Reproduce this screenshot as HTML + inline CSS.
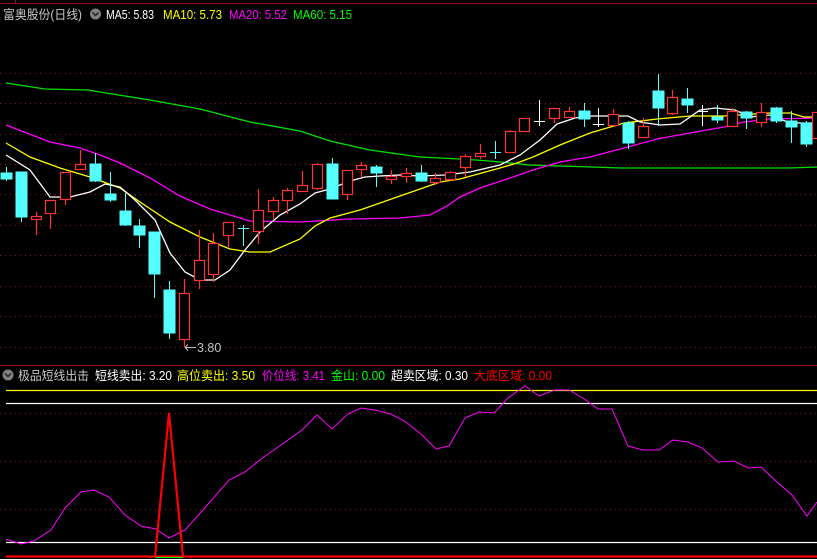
<!DOCTYPE html>
<html><head><meta charset="utf-8"><style>
html,body{margin:0;padding:0;background:#000;width:817px;height:559px;overflow:hidden}
svg{display:block}
text{font-family:"Liberation Sans","Noto Sans CJK SC",sans-serif;font-size:12.5px}
</style></head><body>
<svg width="817" height="559" viewBox="0 0 817 559" xmlns="http://www.w3.org/2000/svg">
<rect width="817" height="559" fill="#000"/>
<line x1="0" y1="3.5" x2="817" y2="3.5" stroke="#a01010" stroke-width="1"/>
<line x1="15.5" y1="0" x2="15.5" y2="3" stroke="#a01010"/>
<line x1="0" y1="365.5" x2="817" y2="365.5" stroke="#a01010" stroke-width="1"/>
<g stroke="#8a1a1a" stroke-dasharray="1,4" stroke-width="1">
<line x1="0" y1="73.5" x2="817" y2="73.5"/><line x1="0" y1="103.5" x2="817" y2="103.5"/>
<line x1="0" y1="134.5" x2="817" y2="134.5"/><line x1="0" y1="164.5" x2="817" y2="164.5"/>
<line x1="0" y1="194.5" x2="817" y2="194.5"/><line x1="0" y1="225.5" x2="817" y2="225.5"/>
<line x1="0" y1="255.5" x2="817" y2="255.5"/><line x1="0" y1="286.5" x2="817" y2="286.5"/>
<line x1="0" y1="316.5" x2="817" y2="316.5"/><line x1="0" y1="347.5" x2="817" y2="347.5"/>
<line x1="0" y1="413.5" x2="817" y2="413.5"/><line x1="0" y1="461.5" x2="817" y2="461.5"/>
<line x1="0" y1="509.5" x2="817" y2="509.5"/>
</g>
<polyline fill="none" stroke="#00e000" stroke-width="1.3" points="6,83 45,89 88,90 100,92 150,100 200,109 250,122 300,131 330,141 370,150 420,157 460,159 490,161 530,165 560,166 592,167 620,168 700,168 790,168 817,167"/>
<polyline fill="none" stroke="#ff00ff" stroke-width="1.3" points="6,125 50,142 80,148 100,155 120,163 150,178 180,196 210,209 250,221 300,222 350,219 400,218 430,215 447,206 460,197 480,188 507,179 533,170 560,162 590,157 624,148 657,139 690,133 724,127 744,122 770,119 817,118"/>
<polyline fill="none" stroke="#ffff00" stroke-width="1.3" points="6,143 30,157 60,168 90,177 120,188 140,202 170,222 200,237 230,249 250,252 270,252 300,239 315,226 330,218 360,210 400,196 440,182 460,179 500,168 517,163 533,157 560,145 590,133 624,123 657,119 690,116 724,116 770,113 790,113 804,117 817,117"/>
<polyline fill="none" stroke="#ffffff" stroke-width="1.3" points="6,155 30,170 50,197 70,197 90,192 105,184 120,187 135,200 155,220 170,253 185,272 200,280 215,280 230,270 245,250 260,232 280,215 300,204 315,193 330,189 350,181 365,177 380,176 400,175 420,176 445,175 470,172 500,165 520,155 540,140 557,124 575,118 590,116 628,116 640,122 660,125 680,124 700,110 715,108 735,110 750,117 770,115 790,123 817,123"/>
<g fill="#55ffff" stroke="#55ffff" stroke-width="1">
<line x1="6.5" y1="167" x2="6.5" y2="181"/><rect x="1" y="173" width="11" height="6"/>
<line x1="21.5" y1="172" x2="21.5" y2="222"/><rect x="16" y="172" width="11" height="45"/>
<line x1="95.5" y1="153" x2="95.5" y2="182"/><rect x="90" y="164" width="11" height="17"/>
<line x1="110.5" y1="172" x2="110.5" y2="202"/><rect x="105" y="194" width="11" height="6"/>
<line x1="125.5" y1="193" x2="125.5" y2="226"/><rect x="120" y="211" width="11" height="14"/>
<line x1="139.5" y1="219" x2="139.5" y2="248"/><rect x="134" y="226" width="11" height="9"/>
<line x1="154.5" y1="232" x2="154.5" y2="298"/><rect x="149" y="232" width="11" height="42"/>
<line x1="169.5" y1="281" x2="169.5" y2="339"/><rect x="164" y="290" width="11" height="43"/>
<line x1="243.5" y1="225" x2="243.5" y2="246"/><line x1="238" y1="228.5" x2="249" y2="228.5"/>
<line x1="332.5" y1="158" x2="332.5" y2="199"/><rect x="327" y="164" width="11" height="35"/>
<line x1="376.5" y1="165" x2="376.5" y2="187"/><rect x="371" y="167" width="11" height="6"/>
<line x1="421.5" y1="165" x2="421.5" y2="182"/><rect x="416" y="173" width="11" height="8"/>
<line x1="495.5" y1="141" x2="495.5" y2="159"/><line x1="490" y1="152.5" x2="501" y2="152.5"/>
<line x1="584.5" y1="103" x2="584.5" y2="127"/><rect x="579" y="111" width="11" height="8"/>
<line x1="628.5" y1="121" x2="628.5" y2="149"/><rect x="623" y="123" width="11" height="20"/>
<line x1="658.5" y1="74" x2="658.5" y2="126"/><rect x="653" y="91" width="11" height="17"/>
<line x1="687.5" y1="88" x2="687.5" y2="113"/><rect x="682" y="99" width="11" height="6"/>
<line x1="717.5" y1="105" x2="717.5" y2="123"/><rect x="712" y="117" width="11" height="3"/>
<line x1="746.5" y1="111" x2="746.5" y2="129"/><rect x="741" y="112" width="11" height="6"/>
<line x1="776.5" y1="107" x2="776.5" y2="123"/><rect x="771" y="108" width="11" height="13"/>
<line x1="791.5" y1="111" x2="791.5" y2="143"/><rect x="786" y="121" width="11" height="6"/>
<line x1="806.5" y1="121" x2="806.5" y2="147"/><rect x="801" y="123" width="11" height="21"/>
</g>
<g stroke="#ffffff" stroke-width="1">
<line x1="539.5" y1="100" x2="539.5" y2="126"/><line x1="534" y1="121.5" x2="545" y2="121.5"/>
<line x1="598.5" y1="108" x2="598.5" y2="127"/><line x1="593" y1="124.5" x2="604" y2="124.5"/>
<line x1="702.5" y1="105" x2="702.5" y2="126"/><line x1="697" y1="111.5" x2="708" y2="111.5"/>
</g>
<g fill="#000" stroke="#ff3333" stroke-width="1.2">
<line x1="36.5" y1="212" x2="36.5" y2="235"/><rect x="31.5" y="216.5" width="10" height="3"/>
<line x1="50.5" y1="213" x2="50.5" y2="229"/><rect x="45.5" y="200.5" width="10" height="13"/>
<line x1="65.5" y1="199" x2="65.5" y2="205"/><rect x="60.5" y="172.5" width="10" height="27"/>
<line x1="80.5" y1="150" x2="80.5" y2="164"/><rect x="75.5" y="164.5" width="10" height="5"/>
<line x1="184.5" y1="279" x2="184.5" y2="293"/><line x1="184.5" y1="339" x2="184.5" y2="347"/><rect x="179.5" y="293.5" width="10" height="46"/>
<line x1="199.5" y1="230" x2="199.5" y2="260"/><line x1="199.5" y1="280" x2="199.5" y2="289"/><rect x="194.5" y="260.5" width="10" height="20"/>
<line x1="213.5" y1="233" x2="213.5" y2="243"/><line x1="213.5" y1="274" x2="213.5" y2="282"/><rect x="208.5" y="243.5" width="10" height="31"/>
<line x1="228.5" y1="235" x2="228.5" y2="247"/><rect x="223.5" y="222.5" width="10" height="13"/>
<line x1="258.5" y1="189" x2="258.5" y2="210"/><line x1="258.5" y1="231" x2="258.5" y2="244"/><rect x="253.5" y="210.5" width="10" height="21"/>
<line x1="273.5" y1="197" x2="273.5" y2="219"/><rect x="268.5" y="200.5" width="10" height="11"/>
<line x1="287.5" y1="188" x2="287.5" y2="214"/><rect x="282.5" y="190.5" width="10" height="10"/>
<line x1="302.5" y1="171" x2="302.5" y2="191"/><rect x="297.5" y="185.5" width="10" height="6"/>
<line x1="317.5" y1="163" x2="317.5" y2="190"/><rect x="312.5" y="164.5" width="10" height="24"/>
<line x1="347.5" y1="194" x2="347.5" y2="200"/><rect x="342.5" y="170.5" width="10" height="24"/>
<line x1="361.5" y1="162" x2="361.5" y2="177"/><rect x="356.5" y="165.5" width="10" height="4"/>
<line x1="391.5" y1="170" x2="391.5" y2="184"/><rect x="386.5" y="176.5" width="10" height="3"/>
<line x1="406.5" y1="168" x2="406.5" y2="183"/><rect x="401.5" y="173.5" width="10" height="3"/>
<line x1="435.5" y1="173" x2="435.5" y2="185"/><rect x="430.5" y="178.5" width="10" height="4"/>
<line x1="450.5" y1="171" x2="450.5" y2="181"/><rect x="445.5" y="172.5" width="10" height="7"/>
<line x1="465.5" y1="154" x2="465.5" y2="177"/><rect x="460.5" y="156.5" width="10" height="11"/>
<line x1="480.5" y1="144" x2="480.5" y2="159"/><rect x="475.5" y="153.5" width="10" height="3"/>
<line x1="510.5" y1="130" x2="510.5" y2="152"/><rect x="505.5" y="131.5" width="10" height="21"/>
<rect x="519.5" y="118.5" width="10" height="13"/>
<line x1="554.5" y1="118" x2="554.5" y2="123"/><rect x="549.5" y="108.5" width="10" height="10"/>
<line x1="569.5" y1="107" x2="569.5" y2="111"/><rect x="564.5" y="111.5" width="10" height="6"/>
<line x1="613.5" y1="109" x2="613.5" y2="114"/><rect x="608.5" y="114.5" width="10" height="11"/>
<line x1="643.5" y1="118" x2="643.5" y2="126"/><rect x="638.5" y="126.5" width="10" height="11"/>
<line x1="672.5" y1="90" x2="672.5" y2="115"/><rect x="667.5" y="97.5" width="10" height="16"/>
<line x1="732.5" y1="108" x2="732.5" y2="111"/><rect x="727.5" y="111.5" width="10" height="15"/>
<line x1="761.5" y1="103" x2="761.5" y2="127"/><rect x="756.5" y="112.5" width="10" height="10"/>
<rect x="812.5" y="112.5" width="10" height="26"/>
</g>
<line x1="185" y1="347.5" x2="196" y2="347.5" stroke="#c0c0c0"/>
<path d="M185,347.5 l3,-3 M185,347.5 l3,3" stroke="#c0c0c0" fill="none"/>
<text x="197" y="352" fill="#c0c0c0" font-size="12">3.80</text>
<text x="3" y="19" fill="#c8c8c8" font-size="13" textLength="79" lengthAdjust="spacingAndGlyphs">富奥股份(日线)</text>
<circle cx="95.5" cy="14" r="5.5" fill="#808080"/>
<path d="M92.5,12.5 l3,3 l3,-3" stroke="#202020" stroke-width="1.5" fill="none"/>
<text x="106" y="19" fill="#ffffff" textLength="48" lengthAdjust="spacingAndGlyphs">MA5: 5.83</text>
<text x="163" y="19" fill="#ffff00" textLength="59" lengthAdjust="spacingAndGlyphs">MA10: 5.73</text>
<text x="229" y="19" fill="#ff00ff" textLength="58" lengthAdjust="spacingAndGlyphs">MA20: 5.52</text>
<text x="293" y="19" fill="#00ff00" textLength="59" lengthAdjust="spacingAndGlyphs">MA60: 5.15</text>
<circle cx="8" cy="375" r="5.5" fill="#808080"/>
<path d="M5,373.5 l3,3 l3,-3" stroke="#202020" stroke-width="1.5" fill="none"/>
<text x="18" y="380" fill="#c8c8c8" textLength="71" lengthAdjust="spacingAndGlyphs">极品短线出击</text>
<text x="95" y="380" fill="#ffffff" textLength="77" lengthAdjust="spacingAndGlyphs">短线卖出: 3.20</text>
<text x="177" y="380" fill="#ffff00" textLength="78" lengthAdjust="spacingAndGlyphs">高位卖出: 3.50</text>
<text x="262" y="380" fill="#ff00ff" textLength="63" lengthAdjust="spacingAndGlyphs">价位线: 3.41</text>
<text x="331" y="380" fill="#00ff00" textLength="54" lengthAdjust="spacingAndGlyphs">金山: 0.00</text>
<text x="391" y="380" fill="#ffffff" textLength="77" lengthAdjust="spacingAndGlyphs">超卖区域: 0.30</text>
<text x="474" y="380" fill="#ff0000" textLength="78" lengthAdjust="spacingAndGlyphs">大底区域: 0.00</text>
<line x1="6" y1="390.5" x2="817" y2="390.5" stroke="#ffff00" stroke-width="1.2"/>
<line x1="6" y1="403.5" x2="817" y2="403.5" stroke="#ffffff" stroke-width="1.2"/>
<line x1="6" y1="542.5" x2="817" y2="542.5" stroke="#ffffff" stroke-width="1.2"/>
<line x1="6" y1="556.5" x2="817" y2="556.5" stroke="#ff0000" stroke-width="2.2"/>
<line x1="155" y1="557.5" x2="183" y2="557.5" stroke="#00ff00" stroke-width="1"/>
<polyline fill="none" stroke="#ff00ff" stroke-width="1" points="6,539 21,544 34,541 51,530 65,508 81,492 94,490 109,497 125,515 141,526 156,529 169,538 185,530 203,510 229,480 245,472 261,459 281,445 302,430 317,415 332,429 348,414 361,408 375,410 391,414 406,422 422,435 436,449 449,446 465,418 479,412 494,413 508,398 525,386 539,396 555,390 569,390 583,398 598,409 612,409 628,446 643,450 659,450 673,440 688,442 702,448 718,462 734,461 748,468 761,467 777,482 792,495 807,516 817,502"/>
<polyline fill="none" stroke="#ff0000" stroke-width="2.2" points="155,557 169,413 183,557"/>
</svg>
</body></html>
